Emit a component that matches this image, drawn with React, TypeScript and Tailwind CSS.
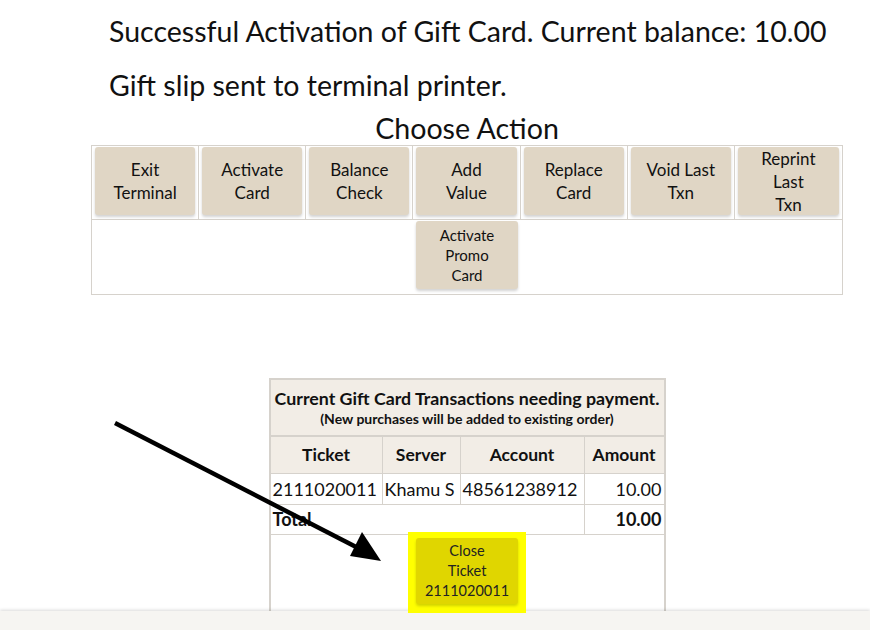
import React from 'react';

const actions = [
  ['Exit', 'Terminal'],
  ['Activate', 'Card'],
  ['Balance', 'Check'],
  ['Add', 'Value'],
  ['Replace', 'Card'],
  ['Void Last', 'Txn'],
  ['Reprint', 'Last', 'Txn'],
];

function ActionButton({ lines }: { lines: string[] }) {
  return (
    <button className="w-full h-[68px] flex flex-col items-center justify-center rounded-[3px] bg-[#e0d6c5] shadow-[0_2px_3px_rgba(0,0,0,0.18)] text-[17px] leading-[23px] text-[#111]">
      {lines.map((l) => (
        <span key={l}>{l}</span>
      ))}
    </button>
  );
}

export default function App() {
  return (
    <div className="relative w-[870px] h-[630px] bg-white overflow-hidden" style={{ fontFamily: 'Lato, "Open Sans", sans-serif' }}>
      <div className="ml-[91px] w-[752px] pt-[14px]">
        <p className="pl-[18px] text-[28.5px] leading-[34px] text-[#111]">
          Successful Activation of Gift Card. Current balance: 10.00
        </p>
        <p className="pl-[18px] mt-[20px] text-[28.5px] leading-[34px] text-[#111]">
          Gift slip sent to terminal printer.
        </p>
        <p className="text-center text-[28.6px] leading-[34px] text-[#111] mt-[9px]">Choose Action</p>

        <div className="border border-[#d6d2cc]">
          <div className="grid grid-cols-7 border-b border-[#d6d2cc]">
            {actions.map((a, i) => (
              <div key={i} className={`px-[3px] pt-[1px] h-[73px] ${i < 6 ? 'border-r border-[#d6d2cc]' : ''}`}>
                <ActionButton lines={a} />
              </div>
            ))}
          </div>
          <div className="h-[74px] flex justify-center pt-[1px]">
            <button className="w-[102px] h-[68px] flex flex-col items-center justify-center rounded-[3px] bg-[#e0d6c5] shadow-[0_2px_3px_rgba(0,0,0,0.18)] text-[15px] leading-[20px] text-[#111]">
              <span>Activate</span>
              <span>Promo</span>
              <span>Card</span>
            </button>
          </div>
        </div>

        <div className="mt-[83px] mx-auto w-[397px] border-2 border-b-0 border-[#d6d2cc] text-[#111]">
          <div className="bg-[#f2ede6] text-center border-b-2 border-[#d6d2cc] pt-[6px] pb-[7px]">
            <div className="font-bold text-[17.8px] leading-[24px]">Current Gift Card Transactions needing payment.</div>
            <div className="font-bold text-[14px] leading-[18px]">(New purchases will be added to existing order)</div>
          </div>
          <div className="grid grid-cols-[112px_78px_124px_79px] bg-[#f2ede6] border-b border-[#d6d2cc] font-bold text-[17.5px] h-[37px]">
            <div className="flex items-center justify-center border-r border-[#d6d2cc]">Ticket</div>
            <div className="flex items-center justify-center border-r border-[#d6d2cc]">Server</div>
            <div className="flex items-center justify-center border-r border-[#d6d2cc]">Account</div>
            <div className="flex items-center justify-center">Amount</div>
          </div>
          <div className="grid grid-cols-[112px_78px_124px_79px] border-b border-[#d6d2cc] text-[18px] h-[31px]">
            <div className="flex items-center pl-[2px] border-r border-[#d6d2cc]">2111020011</div>
            <div className="flex items-center pl-[2px] border-r border-[#d6d2cc]">Khamu S</div>
            <div className="flex items-center pl-[2px] border-r border-[#d6d2cc]">48561238912</div>
            <div className="flex items-center justify-end pr-[2px]">10.00</div>
          </div>
          <div className="grid grid-cols-[314px_79px] border-b border-[#d6d2cc] font-bold text-[18px] h-[30px]">
            <div className="flex items-center pl-[2px] border-r border-[#d6d2cc]">Total</div>
            <div className="flex items-center justify-end pr-[2px]">10.00</div>
          </div>
          <div className="h-[76px] flex justify-center">
            <div className="relative z-10 bg-[#ffff00] w-[118px] h-[81px] -mt-[3px] flex justify-center pt-[6px]">
              <button className="w-[102px] h-[66px] flex flex-col items-center justify-center rounded-[3px] bg-[#e0d600] shadow-[0_2px_3px_rgba(0,0,0,0.18)] text-[14.5px] leading-[20px] text-[#222]">
                <span>Close</span>
                <span>Ticket</span>
                <span>2111020011</span>
              </button>
            </div>
          </div>
        </div>
      </div>

      <div className="absolute left-0 right-0 top-[611px] bottom-0 bg-[#f6f5f2] shadow-[0_-1px_3px_rgba(0,0,0,0.15)]" />

      <svg className="absolute left-0 top-0 pointer-events-none z-20" width="870" height="630">
        <line x1="115" y1="423" x2="360" y2="549" stroke="#000" strokeWidth="4.5" />
        <polygon points="381,561 350,556 362,532" fill="#000" />
      </svg>
    </div>
  );
}
